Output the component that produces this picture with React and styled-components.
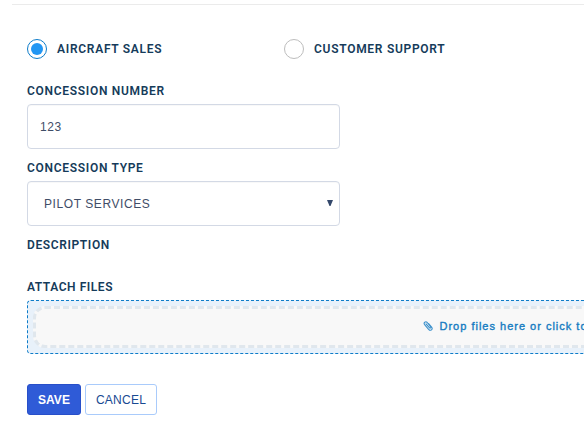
import React from "react";
import styled, { createGlobalStyle } from "styled-components";

const GlobalStyle = createGlobalStyle`
  * { box-sizing: border-box; }
  body {
    margin: 0;
    background: #fff;
    overflow: hidden;
    font-family: "Liberation Sans", Arial, sans-serif;
  }
`;

const Page = styled.main`
  height: 435px;
  overflow: hidden;
  padding: 4px 0 0 12px;
`;

const Panel = styled.form`
  width: 900px;
  border-top: 1px solid #ebebeb;
  padding: 34px 15px 0;
`;

const RadioRow = styled.div`
  display: grid;
  grid-template-columns: 257px 257px;
  height: 20px;
  margin-bottom: 23px;
`;

const RadioOption = styled.label`
  display: flex;
  align-items: center;
  gap: 10px;
  color: #153b5a;
  font-family: Roboto, Arial, sans-serif;
  font-size: 12px;
  font-weight: 600;
  line-height: 20px;
  letter-spacing: 0.72px;
  white-space: nowrap;
`;

const RadioMark = styled.span`
  flex: none;
  display: grid;
  place-items: center;
  width: 20px;
  height: 20px;
  border: 1px solid ${(p) => (p.$checked ? "#0d7cc9" : "#bdbdbd")};
  border-radius: 50%;

  &::after {
    content: "";
    width: 12px;
    height: 12px;
    border-radius: 50%;
    background: ${(p) => (p.$checked ? "#2196f3" : "transparent")};
  }
`;

const Label = styled.div`
  height: 18px;
  line-height: 18px;
  margin-bottom: ${(p) => p.$gap || 4}px;
  color: #153b5a;
  font-family: Roboto, Arial, sans-serif;
  font-size: 12px;
  font-weight: 600;
  letter-spacing: ${(p) => p.$spacing || "0.7px"};
  white-space: nowrap;
`;

const Field = styled.div`
  display: flex;
  align-items: center;
  justify-content: space-between;
  width: 313px;
  height: 45px;
  margin-bottom: 10px;
  padding: 0 6px 0 ${(p) => p.$inset}px;
  border: 1px solid #d3d9e5;
  border-radius: 4px;
  box-shadow: inset 0 1px 1px rgba(0, 0, 0, 0.03);
  color: #3f4d67;
  font-size: 12px;
  letter-spacing: 0.58px;
`;

const Arrow = styled.svg`
  width: 6px;
  height: 6px;
  margin-bottom: 1px;
`;

const DropZone = styled.div`
  height: 54px;
  padding: 5px;
  border: 1px dashed #0d7cc9;
  border-radius: 4px;
  background: #e8f1fa;
  margin-bottom: 30px;
`;

const DropTarget = styled.div`
  display: flex;
  align-items: center;
  height: 42px;
  padding: 0 0 2px 387px;
  border: 3px dashed #e0e7ed;
  border-radius: 12px;
  background: #f8f8f8;
  color: #147bc1;
  font-size: 11px;
  -webkit-text-stroke: 0.35px currentColor;
  letter-spacing: 1px;
  white-space: nowrap;
`;

const Clip = styled.svg`
  width: 10px;
  height: 10px;
  margin-right: 6.5px;
`;

const Actions = styled.div`
  display: flex;
  gap: 4px;
`;

const Button = styled.button`
  width: ${(p) => p.$width}px;
  height: 31px;
  padding: 0;
  border: 1px solid ${(p) => (p.$primary ? "#284fc9" : "#a9cbfb")};
  border-radius: 3px;
  background: ${(p) => (p.$primary ? "#2f5bd7" : "#fff")};
  color: ${(p) => (p.$primary ? "#fff" : "#184a92")};
  font-family: inherit;
  font-size: 12px;
  font-weight: ${(p) => (p.$primary ? 700 : 400)};
  letter-spacing: ${(p) => (p.$primary ? "0" : "0.25px")};
`;

export default function App() {
  return (
    <>
      <GlobalStyle />
      <Page>
        <Panel>
          <RadioRow>
            <RadioOption>
              <RadioMark $checked />
              AIRCRAFT SALES
            </RadioOption>
            <RadioOption>
              <RadioMark />
              CUSTOMER SUPPORT
            </RadioOption>
          </RadioRow>
          <Label>CONCESSION NUMBER</Label>
          <Field $inset={12}>123</Field>
          <Label>CONCESSION TYPE</Label>
          <Field $inset={16}>
            PILOT SERVICES
            <Arrow viewBox="0 0 6 6">
              <path d="M0 0h6L3.5 6h-1z" fill="#34486b" />
            </Arrow>
          </Field>
          <Label $gap={24} $spacing="0.62px">DESCRIPTION</Label>
          <Label $spacing="0.55px">ATTACH FILES</Label>
          <DropZone>
            <DropTarget>
              <Clip viewBox="0 0 10 10" fill="none" stroke="#3c91cc" strokeWidth="1.1" strokeLinecap="round">
                <path d="M3 2.800l3.400 3.900c.8.9 1.900-.1 1.200-1L4.200 1.500C2.600-.2.200 1.700 1.600 3.600l4 4.700c2 2.200 4.600 0 3-2.100L5.600 2.600" />
              </Clip>
              Drop files here or click to
            </DropTarget>
          </DropZone>
          <Actions>
            <Button type="button" $primary $width={54}>SAVE</Button>
            <Button type="button" $width={72}>CANCEL</Button>
          </Actions>
        </Panel>
      </Page>
    </>
  );
}
